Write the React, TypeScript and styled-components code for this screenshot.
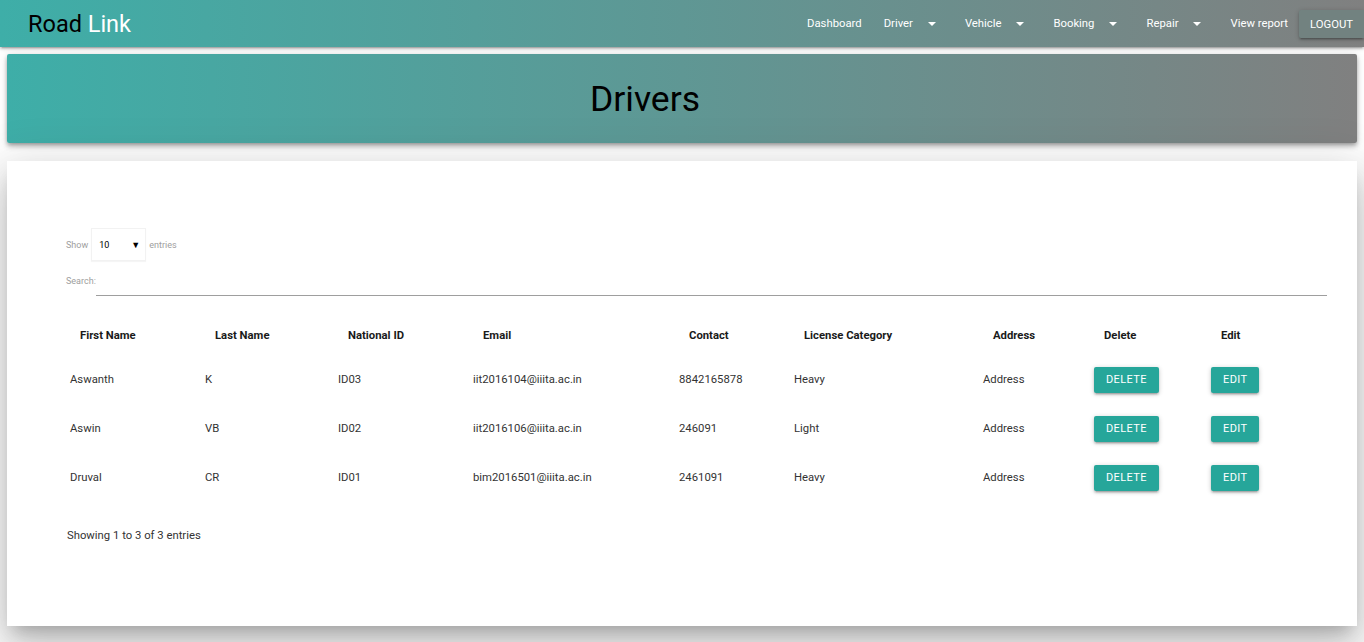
import React from "react";
import styled, { createGlobalStyle } from "styled-components";

const Global = createGlobalStyle`
  html, body { margin: 0; padding: 0; background: #ffffff; }
  body { font-family: Roboto, "Noto Sans", "Liberation Sans", sans-serif; color: rgba(0,0,0,0.87); padding-bottom: 16px; }
  * { box-sizing: border-box; }
`;

const gradient = "linear-gradient(to right, #3eaea8, #808080)";

const Nav = styled.nav`
  height: 47px;
  background: ${gradient};
  display: flex;
  align-items: center;
  box-shadow: 0 2px 2px 0 rgba(0,0,0,.14), 0 3px 1px -2px rgba(0,0,0,.12), 0 1px 5px 0 rgba(0,0,0,.2);
  position: relative;
  z-index: 2;
`;

const Logo = styled.a`
  font-size: 23.5px;
  padding-left: 28px;
  color: #000;
  text-decoration: none;
  flex: 1;
  span { color: #fff; }
`;

const Menu = styled.ul`
  list-style: none;
  margin: 0;
  padding: 0;
  display: flex;
  align-items: center;
  height: 100%;
`;

const MenuItem = styled.li`
  display: flex;
  align-items: center;
  padding: 0 11px;
  color: #fff;
  font-size: 11.3px;
  height: 100%;
  padding-bottom: 1px;
`;

const Caret = styled.span`
  width: 0;
  height: 0;
  border-left: 4px solid transparent;
  border-right: 4px solid transparent;
  border-top: 4px solid #fff;
  margin-left: 15px;
  margin-right: 7px;
  margin-top: 1px;
`;

const LogoutButton = styled.button`
  height: 28px;
  margin-top: 1px;
  padding: 0 11px;
  border: none;
  border-radius: 2px 0 0 2px;
  background: #728280;
  color: #fff;
  font-family: Roboto, "Liberation Sans", sans-serif;
  font-size: 11.3px;
  text-transform: uppercase;
  box-shadow: 0 2px 2px 0 rgba(0,0,0,.14), 0 3px 1px -2px rgba(0,0,0,.12), 0 1px 5px 0 rgba(0,0,0,.2);
  width: 65px;
`;

const Banner = styled.header`
  margin: 7px 7px 0;
  height: 89px;
  background: ${gradient};
  display: flex;
  align-items: center;
  justify-content: center;
  padding-right: 74px;
  border-radius: 2px;
  box-shadow: 0 4px 5px 0 rgba(0,0,0,.14), 0 1px 10px 0 rgba(0,0,0,.12), 0 2px 4px -1px rgba(0,0,0,.3);
`;

const Title = styled.h1`
  margin: 0;
  font-size: 35.5px;
  font-weight: 400;
  color: #000;
`;

const Card = styled.section`
  margin: 18px 7px 0;
  background: #fff;
  height: 465px;
  padding: 67px 30px 0 59px;
  box-shadow: 0 24px 38px 3px rgba(0,0,0,.14), 0 9px 46px 8px rgba(0,0,0,.12), 0 11px 15px -7px rgba(0,0,0,.2);
  position: relative;
`;

const SmallLabel = styled.span`
  font-size: 9px;
  color: #9e9e9e;
`;

const LengthRow = styled.div`
  display: flex;
  align-items: center;
  gap: 3px;
  height: 33px;
`;

const SelectBox = styled.div`
  width: 55px;
  height: 33px;
  border: 1px solid #f2f2f2;
  box-shadow: 0 1px 1px rgba(0,0,0,0.04);
  display: flex;
  align-items: center;
  justify-content: space-between;
  padding: 0 5px 0 7px;
  font-size: 9px;
  color: #000;
  background: #fff;
`;

const SearchRow = styled.div`
  display: flex;
  align-items: center;
  margin-top: 5px;
`;

const SearchInput = styled.div`
  flex: 1;
  height: 30px;
  border-bottom: 1px solid #9e9e9e;
`;

const Table = styled.div`
  margin: 20px 0 0 -6px;
  display: grid;
  grid-template-columns: 135px 133px 135px 206px 115px 189px 111px 117px 1fr;
  font-size: 11.3px;
`;

const HeadCell = styled.div`
  height: 39px;
  display: flex;
  align-items: center;
  padding-left: 20px;
  font-weight: 700;
  color: #1a1a1a;
`;

const Cell = styled.div`
  height: 49px;
  display: flex;
  align-items: center;
  padding-left: 10px;
  color: #333;
`;

const ActionButton = styled.button`
  height: 26px;
  padding: 0 12px;
  border: none;
  border-radius: 2px;
  background: #26a69a;
  color: #fff;
  font-family: Roboto, "Liberation Sans", sans-serif;
  font-size: 11px;
  letter-spacing: 0.4px;
  text-transform: uppercase;
  box-shadow: 0 2px 2px 0 rgba(0,0,0,.14), 0 3px 1px -2px rgba(0,0,0,.12), 0 1px 5px 0 rgba(0,0,0,.2);
`;

const Info = styled.div`
  margin-top: 27px;
  font-size: 11.3px;
  color: #333;
  padding-left: 1px;
`;

const headers = ["First Name", "Last Name", "National ID", "Email", "Contact", "License Category", "Address", "Delete", "Edit"];

const drivers = [
  { first: "Aswanth", last: "K", id: "ID03", email: "iit2016104@iiita.ac.in", contact: "8842165878", license: "Heavy", address: "Address" },
  { first: "Aswin", last: "VB", id: "ID02", email: "iit2016106@iiita.ac.in", contact: "246091", license: "Light", address: "Address" },
  { first: "Druval", last: "CR", id: "ID01", email: "bim2016501@iiita.ac.in", contact: "2461091", license: "Heavy", address: "Address" },
];

export default function App() {
  return (
    <>
      <Global />
      <Nav>
        <Logo href="#">Road <span>Link</span></Logo>
        <Menu>
          <MenuItem>Dashboard</MenuItem>
          <MenuItem>Driver<Caret /></MenuItem>
          <MenuItem>Vehicle<Caret /></MenuItem>
          <MenuItem>Booking<Caret /></MenuItem>
          <MenuItem>Repair<Caret /></MenuItem>
          <MenuItem>View report</MenuItem>
        </Menu>
        <LogoutButton>Logout</LogoutButton>
      </Nav>
      <Banner>
        <Title>Drivers</Title>
      </Banner>
      <Card>
        <LengthRow>
          <SmallLabel>Show</SmallLabel>
          <SelectBox>
            <span>10</span>
            <span>▼</span>
          </SelectBox>
          <SmallLabel>entries</SmallLabel>
        </LengthRow>
        <SearchRow>
          <SmallLabel>Search:</SmallLabel>
          <SearchInput />
        </SearchRow>
        <Table>
          {headers.map((h) => (
            <HeadCell key={h}>{h}</HeadCell>
          ))}
          {drivers.map((d) => (
            <React.Fragment key={d.id}>
              <Cell>{d.first}</Cell>
              <Cell>{d.last}</Cell>
              <Cell>{d.id}</Cell>
              <Cell>{d.email}</Cell>
              <Cell>{d.contact}</Cell>
              <Cell>{d.license}</Cell>
              <Cell>{d.address}</Cell>
              <Cell><ActionButton>Delete</ActionButton></Cell>
              <Cell><ActionButton>Edit</ActionButton></Cell>
            </React.Fragment>
          ))}
        </Table>
        <Info>Showing 1 to 3 of 3 entries</Info>
      </Card>
    </>
  );
}
